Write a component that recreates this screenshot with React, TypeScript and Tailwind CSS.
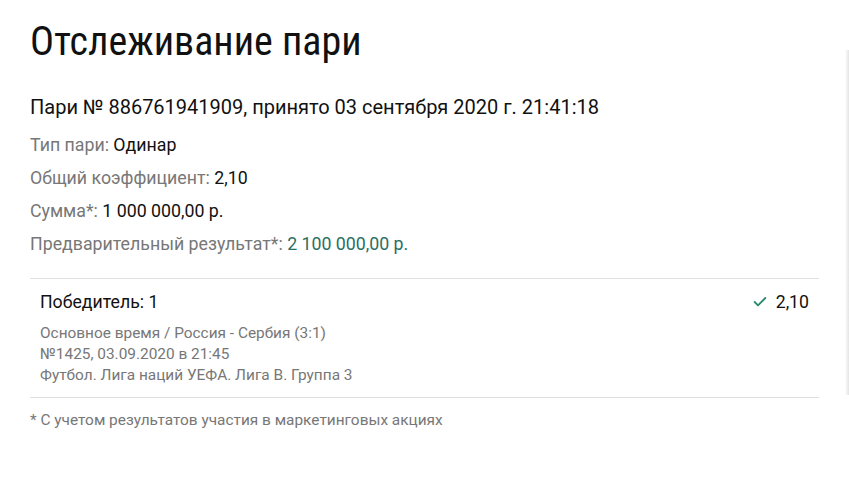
import { Check } from "lucide-react";

const details = [
  { label: "Тип пари:", value: "Одинар" },
  { label: "Общий коэффициент:", value: "2,10" },
  { label: "Сумма*:", value: "1 000 000,00 р." },
];

export default function App() {
  return (
    <div
      className="flex min-h-[477px] bg-white text-[#111]"
      style={{ fontFamily: "Roboto, 'Liberation Sans', sans-serif" }}
    >
      <div className="flex-1 pl-[30px] pr-[26px] pt-[18px]">
        <h1 className="text-[40px] leading-[48px] font-normal font-stretch-semi-condensed">
          Отслеживание пари
        </h1>

        <h2 className="mt-[28px] text-[20px] leading-[26px]">
          Пари № 886761941909, принято 03 сентября 2020 г. 21:41:18
        </h2>

        {/* Bet summary */}
        <div className="mt-[9px] text-[17.75px] leading-[33px]">
          {details.map((row) => (
            <div key={row.label}>
              <span className="text-[#777]">{row.label}</span> {row.value}
            </div>
          ))}
          <div>
            <span className="text-[#777]">Предварительный результат*:</span>{" "}
            <span className="text-[#2b6e62]">2 100 000,00 р.</span>
          </div>
        </div>

        {/* Event */}
        <div className="mt-[17px] border-y border-[#e0e0e0] px-[10px] pt-[11px] pb-[11px]">
          <div className="flex items-center justify-between text-[17.7px] leading-[24px]">
            <span>Победитель: 1</span>
            <span className="flex items-center gap-[8px]">
              <Check className="h-[16px] w-[16px] text-[#2b8a6e]" strokeWidth={2.75} />
              2,10
            </span>
          </div>
          <div className="mt-[9px] text-[15.4px] leading-[21px] text-[#777]">
            <div>Основное время / Россия - Сербия (3:1)</div>
            <div>№1425, 03.09.2020 в 21:45</div>
            <div>Футбол. Лига наций УЕФА. Лига B. Группа 3</div>
          </div>
        </div>

        <p className="mt-[11px] text-[15.4px] leading-[22px] text-[#777]">
          * С учетом результатов участия в маркетинговых акциях
        </p>
      </div>

      {/* edge shadow of the neighbouring panel */}
      <div className="mt-[50px] h-[345px] w-[4px] bg-gradient-to-r from-white to-[#e4e4e4]" />
    </div>
  );
}
